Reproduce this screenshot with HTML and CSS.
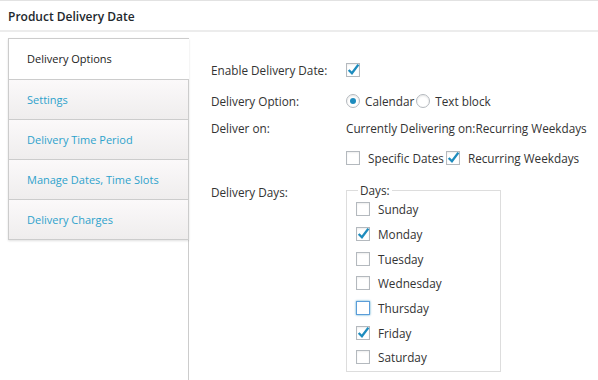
FILE: index.html
```html
<!DOCTYPE html>
<html lang="en">
<head>
  <meta charset="utf-8">
  <title>Product Delivery Date</title>
  <link rel="stylesheet" href="styles.css">
</head>
<body>
  <header class="page-head">
    <h1>Product Delivery Date</h1>
  </header>
  <div class="panel">
    <ul class="tabs">
      <li class="tab active"><a href="#">Delivery Options</a></li>
      <li class="tab"><a href="#">Settings</a></li>
      <li class="tab"><a href="#">Delivery Time Period</a></li>
      <li class="tab"><a href="#">Manage Dates, Time Slots</a></li>
      <li class="tab"><a href="#">Delivery Charges</a></li>
    </ul>
    <div class="content">
      <div class="row row-enable">
        <span class="label">Enable Delivery Date:</span>
        <span class="box checked"><svg viewBox="0 0 13 13"><path d="M2.5 6.5 L5.5 9.5 L11.5 1.5"/></svg></span>
      </div>
      <div class="row row-option">
        <span class="label">Delivery Option:</span>
        <span class="radio on"></span><span class="opt">Calendar</span>
        <span class="radio"></span><span class="opt">Text block</span>
      </div>
      <div class="row row-on">
        <span class="label">Deliver on:</span>
        <span>Currently Delivering on:Recurring Weekdays</span>
      </div>
      <div class="row row-types">
        <span class="label"></span>
        <span class="box"></span><span class="opt wide">Specific Dates</span>
        <span class="box checked"><svg viewBox="0 0 13 13"><path d="M2.5 6.5 L5.5 9.5 L11.5 1.5"/></svg></span><span class="opt wide">Recurring Weekdays</span>
      </div>
      <div class="row row-days">
        <span class="label">Delivery Days:</span>
        <fieldset class="days">
          <legend>Days:</legend>
          <div class="day"><span class="box"></span>Sunday</div>
          <div class="day"><span class="box checked"><svg viewBox="0 0 13 13"><path d="M2.5 6.5 L5.5 9.5 L11.5 1.5"/></svg></span>Monday</div>
          <div class="day"><span class="box"></span>Tuesday</div>
          <div class="day"><span class="box"></span>Wednesday</div>
          <div class="day"><span class="box focus"></span>Thursday</div>
          <div class="day"><span class="box checked"><svg viewBox="0 0 13 13"><path d="M2.5 6.5 L5.5 9.5 L11.5 1.5"/></svg></span>Friday</div>
          <div class="day"><span class="box"></span>Saturday</div>
        </fieldset>
      </div>
    </div>
  </div>
</body>
</html>
```

FILE: styles.css
```css
* {
  margin: 0;
  padding: 0;
  box-sizing: border-box;
}

body {
  border-top: 1px solid #e2e2e2;
  background-color: #FFFFFF;
  color: #333333;
  font-family: "Open Sans", sans-serif;
  font-size: 11.75px;
  line-height: 16px;
}

a {
  text-decoration: none;
  color: inherit;
}

.page-head {
  height: 31px;
  padding: 8px 8px 0;
  border-bottom: 2px solid #ececec;
}

.page-head h1 {
  font-size: 12px;
  font-weight: 600;
  color: #23282d;
}

.panel {
  display: flex;
  margin-top: 6px;
  padding-left: 8px;
}

.tabs {
  width: 181px;
  margin-right: -1px;
  align-self: flex-start;
  position: relative;
  z-index: 1;
  border: 1px solid #cccccc;
  border-right: 0;
  box-shadow: 0 1px 2px rgba(0, 0, 0, 0.12);
  list-style: none;
  font-size: 11px;
}

.tab {
  height: 40px;
  padding: 12px 0 0 18px;
  border-right: 1px solid #cccccc;
  background: linear-gradient(#fbf9fa, #efeded);
  color: #2ea2cc;
}

.tab + .tab {
  border-top: 1px solid #cccccc;
}

.tab.active {
  border-right: 0;
  background: #FFFFFF;
  color: #222222;
}

.content {
  flex: 1;
  min-height: 342px;
  padding: 20px 0 0 22px;
  border-left: 1px solid #cccccc;
}

.row {
  display: flex;
  align-items: center;
  height: 24px;
}

.row-option {
  margin-top: 7px;
}

.row-on {
  margin-top: 3px;
}

.row-types {
  margin-top: 6px;
}

.row-days {
  align-items: flex-start;
  height: auto;
  margin-top: 14px;
}

.label {
  width: 135px;
  flex: none;
}

.opt {
  margin: 0 2px 0 5px;
}

.opt.wide {
  margin: 0 2px 0 8px;
}

.box {
  display: inline-block;
  flex: none;
  width: 14px;
  height: 14px;
  border: 1px solid #b4b9be;
  background: #FFFFFF;
  box-shadow: inset 0 1px 2px rgba(0, 0, 0, 0.07);
}

.box svg {
  display: block;
  width: 14px;
  height: 14px;
  margin: -1px 0 0 -1px;
  fill: none;
  stroke: #1e8cbe;
  stroke-width: 2.2;
}

.box.focus {
  border-color: #5b9dd9;
  box-shadow: 0 0 2px rgba(30, 140, 190, 0.8);
}

.radio {
  display: inline-block;
  flex: none;
  width: 14px;
  height: 14px;
  border: 1px solid #b4b9be;
  border-radius: 50%;
  box-shadow: inset 0 1px 2px rgba(0, 0, 0, 0.1);
  position: relative;
}

.radio.on::after {
  content: "";
  position: absolute;
  left: 3px;
  top: 3px;
  width: 6px;
  height: 6px;
  border-radius: 50%;
  background: #1e8cbe;
}

.days {
  width: 155px;
  margin-top: -2px;
  padding: 0 0 1px 9px;
  border: 1px solid #dddddd;
}

.days legend {
  margin-left: 2px;
  padding: 0 2px;
}

.day {
  display: flex;
  align-items: center;
  height: 24.7px;
}

.day:first-of-type {
  margin-top: -1px;
}

.day .box {
  margin-right: 8px;
}
```
